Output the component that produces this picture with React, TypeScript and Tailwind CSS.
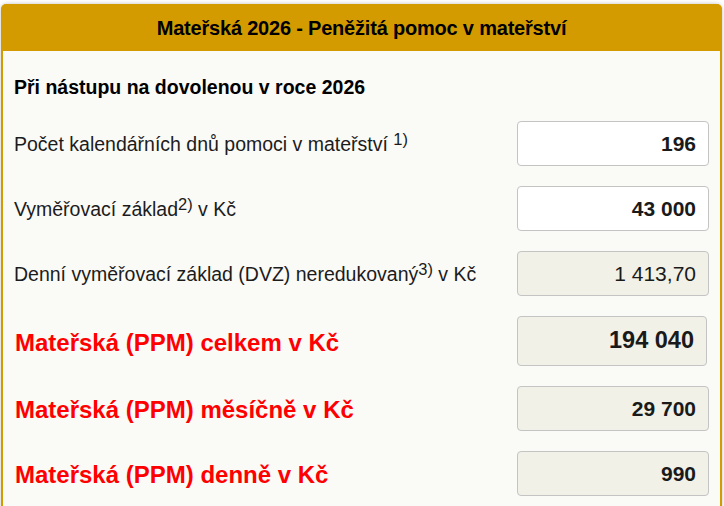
import React from 'react';

type Row = {
  label: React.ReactNode;
  value: string;
  editable?: boolean;
  big?: boolean;
  tall?: boolean;
};

const Sup = ({ children }: { children: React.ReactNode }) => (
  <span className="relative -top-[6px] text-[16.5px] leading-none">{children}</span>
);

const rows: Row[] = [
  {
    label: (
      <>
        Počet kalendářních dnů pomoci v mateřství <Sup>1)</Sup>
      </>
    ),
    value: '196',
    editable: true,
  },
  {
    label: (
      <>
        Vyměřovací základ<Sup>2)</Sup> v Kč
      </>
    ),
    value: '43 000',
    editable: true,
  },
  {
    label: (
      <>
        Denní vyměřovací základ (DVZ) neredukovaný<Sup>3)</Sup> v Kč
      </>
    ),
    value: '1 413,70',
  },
  { label: 'Mateřská (PPM) celkem v Kč', value: '194 040', big: true, tall: true },
  { label: 'Mateřská (PPM) měsíčně v Kč', value: '29 700', big: true },
  { label: 'Mateřská (PPM) denně v Kč', value: '990', big: true },
];

export default function App() {
  return (
    <div
      className="w-[724px] h-[506px] overflow-hidden bg-white pt-[4px] pl-[1px] pr-[2px]"
      style={{ fontFamily: '"Liberation Sans", Arial, sans-serif' }}
    >
      <div className="rounded-t-[6px] border-x-2 border-t-0 border-[#d49b00] bg-[#fafaf7] shadow-[0_0_4px_rgba(0,0,0,0.25)] h-[520px]">
        {/* Header */}
        <div className="h-[47px] bg-[#d49b00] rounded-t-[5px] -mx-[2px] flex items-center justify-center">
          <h1 className="text-[20px] font-bold text-black tracking-[-0.2px]">
            Mateřská 2026 - Peněžitá pomoc v mateřství
          </h1>
        </div>

        <div className="pl-[11px] pr-[11px]">
          <div className="h-[60px] flex items-center pt-[14px]">
            <h2 className="text-[19.5px] font-bold text-black">Při nástupu na dovolenou v roce 2026</h2>
          </div>

          <div className="flex flex-col">
            {rows.map((row, i) => (
              <div
                key={i}
                className={`flex items-center justify-between ${row.tall ? 'h-[70px]' : 'h-[65px]'}`}
              >
                <div
                  className={
                    row.big
                      ? 'text-[24px] font-bold text-[#ff0000] pl-[1px] pt-[3px]'
                      : 'text-[19.5px] text-[#1c1c1c] pt-[2px]'
                  }
                >
                  {row.label}
                </div>
                <div
                  className={`${row.tall ? 'h-[50px] w-[190px] mr-[2px]' : 'h-[45px] w-[192px]'} rounded-[4px] border border-[#c4c4c4] flex items-center justify-end pr-[12px] ${
                    row.editable ? 'bg-white' : 'bg-[#f1f1e7]'
                  } ${row.tall ? 'text-[23.5px] font-bold' : row.big || row.editable ? 'text-[21px] font-bold' : 'text-[21px]'} text-[#1a1a1a]`}
                >
                  {row.value}
                </div>
              </div>
            ))}
          </div>
        </div>
      </div>
    </div>
  );
}
